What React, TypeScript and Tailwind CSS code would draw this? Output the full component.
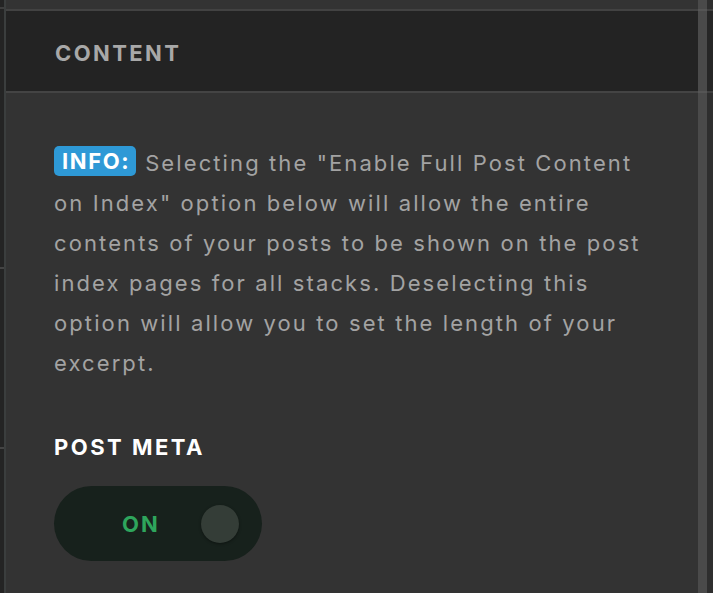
import React from "react";

export default function App() {
  const font = { fontFamily: "Inter, 'Noto Sans', sans-serif" };
  return (
    <div className="flex h-[593px] w-[713px] overflow-hidden bg-[#333333]" style={font}>
      {/* left strip */}
      <div className="flex w-[4px] flex-col bg-[#242424]">
        <div className="h-[9px] border-b-2 border-[#3e3e3e]" />
        <div className="h-[260px] border-b-2 border-[#444444]" />
        <div className="h-[180px] border-b-2 border-[#444444]" />
        <div className="flex-1" />
      </div>
      <div className="w-[2px] bg-[#3b3e3e]" />

      {/* main panel */}
      <div className="flex flex-1 flex-col">
        <div className="h-[9px] bg-[#333333]" />
        <div className="h-[2px] bg-[#424242]" />
        <div className="flex h-[80px] items-center bg-[#232323] pl-[49px] pt-[3px]">
          <span className="text-[22px] font-bold leading-[28px] tracking-[2.4px] text-[#a8a8a8]">
            CONTENT
          </span>
        </div>
        <div className="h-[2px] bg-[#444444]" />
        <div className="flex-1 bg-[#333333] pl-[48px] pr-[40px] pt-[50px]">
          <p className="text-[22px] leading-[40px] tracking-[2.1px] text-[#a3a3a3]">
            <span className="mr-[9px] inline-block h-[30px] rounded-[5px] bg-[#2e99d6] pl-[8px] pr-[6px] align-[2px] text-[22px] font-bold leading-[30px] tracking-[1.6px] text-white">
              INFO:
            </span>
            Selecting the "Enable Full Post Content on Index" option below will allow the entire contents of your posts to be shown on the post index pages for all stacks. Deselecting this option will allow you to set the length of your excerpt.
          </p>
          <div className="mt-[50px] text-[22px] font-bold leading-[28px] tracking-[2.5px] text-white">
            POST META
          </div>
          <div className="mt-[25px] flex h-[75px] w-[208px] items-center rounded-full bg-[#17211c] pl-[68px] pr-[23px]">
            <span className="text-[22px] font-bold leading-[28px] tracking-[2px] text-[#2ea55c]">
              ON
            </span>
            <span className="ml-auto h-[38px] w-[38px] rounded-full bg-[#343d37] shadow-[0_1px_3px_rgba(0,0,0,0.4)]" />
          </div>
        </div>
      </div>

      {/* right edge */}
      <div className="flex w-[9px] flex-col bg-[#4a4a4a]">
        <div className="h-[9px]" />
        <div className="h-[2px] bg-[#555555]" />
        <div className="h-[80px]" />
        <div className="h-[2px] bg-[#555555]" />
      </div>
      <div className="flex w-[6px] flex-col bg-[#2e2e2e]">
        <div className="h-[9px]" />
        <div className="h-[2px] bg-[#404040]" />
        <div className="h-[80px] bg-[#262626]" />
        <div className="h-[2px] bg-[#404040]" />
      </div>
    </div>
  );
}
